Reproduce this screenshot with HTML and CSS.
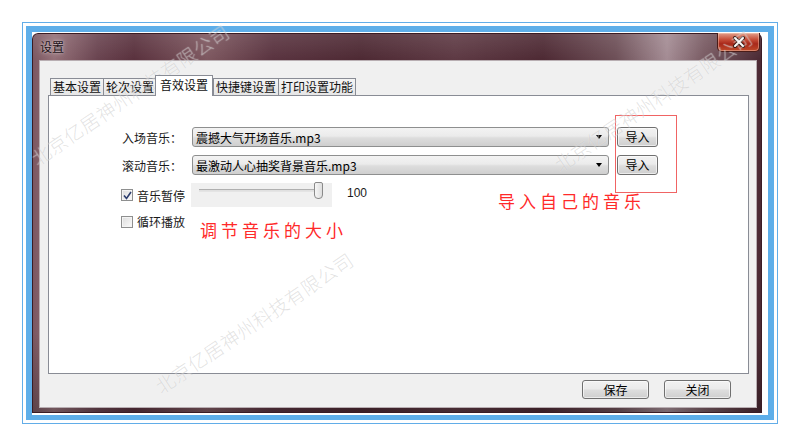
FILE: index.html
```html
<!DOCTYPE html>
<html lang="zh">
<head>
<meta charset="utf-8">
<link rel="stylesheet" href="styles.css">
</head>
<body>
<div class="frame-outer">
  <div class="frame-blue">
    <div class="window">
      <div class="titlebar">
        <span class="title">设置</span>
        <div class="close-btn">
          <svg width="16" height="12" viewBox="0 0 16 12"><path d="M4 2 L12 10 M12 2 L4 10" stroke="#3a1a14" stroke-width="4" stroke-linecap="round"/><path d="M4 2 L12 10 M12 2 L4 10" stroke="#ffffff" stroke-width="2" stroke-linecap="round"/></svg>
        </div>
      </div>
      <div class="client">
        <div class="tabs">
          <div class="tab">基本设置</div>
          <div class="tab">轮次设置</div>
          <div class="tab active">音效设置</div>
          <div class="tab">快捷键设置</div>
          <div class="tab">打印设置功能</div>
        </div>
        <div class="panel">
          <div class="row">
            <span class="label">入场音乐：</span>
            <div class="combo"><span>震撼大气开场音乐.mp3</span><i class="arrow"></i></div>
            <button class="btn import">导入</button>
          </div>
          <div class="row">
            <span class="label">滚动音乐：</span>
            <div class="combo"><span>最激动人心抽奖背景音乐.mp3</span><i class="arrow"></i></div>
            <button class="btn import">导入</button>
          </div>
          <div class="row row-slider">
            <label class="check-label">
              <span class="checkbox checked"><svg width="9" height="9" viewBox="0 0 9 9"><path d="M1 4.5 L3.5 7.5 L8 1" fill="none" stroke="#2c3d6e" stroke-width="1.6"/></svg></span>
              音乐暂停
            </label>
            <div class="slider">
              <div class="track"></div>
              <div class="thumb"></div>
            </div>
            <span class="value">100</span>
          </div>
          <div class="row row-check">
            <label class="check-label">
              <span class="checkbox"></span>
              循环播放
            </label>
          </div>
        </div>
        <div class="footer">
          <button class="btn foot">保存</button>
          <button class="btn foot">关闭</button>
        </div>
      </div>
    </div>
  </div>
</div>

<div class="note-box"></div>
<div class="note note-import">导入自己的音乐</div>
<div class="note note-volume">调节音乐的大小</div>

<div class="wm wm1">北京亿居神州科技有限公司</div>
<div class="wm wm2">北京亿居神州科技有限公司</div>
<div class="wm wm3">北京亿居神州科技有限公司</div>
</body>
</html>
```

FILE: styles.css
```css
* { box-sizing: border-box; }
html, body {
  margin: 0;
  padding: 0;
  background: #ffffff;
  width: 800px;
  height: 446px;
  overflow: hidden;
  font-family: "Noto Sans CJK SC", "Liberation Sans", sans-serif;
  font-size: 12px;
  color: #1a1a1a;
}
body { position: relative; }

.frame-outer {
  margin: 22px 0 0 22px;
  width: 756px;
  height: 402px;
  border: 1px solid #62ade8;
  padding: 3px;
  background: #fff;
}
.frame-blue {
  width: 100%;
  height: 100%;
  border-style: solid;
  border-color: #5eaee9;
  border-width: 6px 6px 5px 6px;
  background: #fff;
  padding-top: 1px;
}

.window {
  width: 730px;
  height: 380px;
  border-radius: 6px 6px 0 0;
  padding: 0 5px 5px 7px;
  display: flex;
  flex-direction: column;
  background:
    linear-gradient(180deg, rgba(255,255,255,0.10) 0px, rgba(255,255,255,0) 26px, rgba(0,0,0,0) 300px, rgba(0,0,0,0.25) 380px),
    linear-gradient(90deg, #7a5660 0%, #947078 3%, #6a4450 9%, #5a323e 14%, #7e5860 24%, #5a3440 33%, #4e2a34 45%, #5e3a44 58%, #4e2a34 70%, #6e5058 80%, #a48c94 87%, #7a5c64 92%, #4a2832 100%);
  box-shadow: inset 0 0 0 1px #3a1c24;
}
.titlebar {
  height: 27px;
  display: flex;
  justify-content: space-between;
  align-items: flex-start;
}
.title {
  margin-top: 7px;
  margin-left: 1px;
  font-size: 12px;
  line-height: 14px;
  color: #1c1016;
  text-shadow: 0 0 5px rgba(255,255,255,0.55), 0 0 2px rgba(255,255,255,0.5);
}
.close-btn {
  width: 43px;
  height: 19px;
  margin-right: -3px;
  border: 1px solid #4a1c18;
  border-top: none;
  border-radius: 0 0 5px 5px;
  background: linear-gradient(180deg, #e2a08c 0%, #c8503a 35%, #a8281a 60%, #c04a2a 100%);
  display: flex;
  align-items: center;
  justify-content: center;
  box-shadow: inset 0 0 0 1px rgba(255,220,200,0.4);
}

.client {
  flex: 1;
  background: #f0f0f0;
  border: 1px solid #b8aeb2;
  padding: 14px 7px 0 8px;
  display: flex;
  flex-direction: column;
}

.tabs {
  display: flex;
  align-items: flex-end;
  height: 20px;
  padding-left: 2px;
}
.tab {
  height: 17px;
  padding: 0 2px;
  border: 1px solid #898c95;
  border-bottom: none;
  background: linear-gradient(180deg, #f4f4f4, #e6e6e6);
  line-height: 15px;
  color: #111;
  margin-right: -1px;
  white-space: nowrap;
}
.tab.active {
  position: relative;
  z-index: 1;
  height: 21px;
  margin-bottom: -1px;
  padding: 0 4px;
  margin-left: -1px;
  margin-right: 0;
  background: #ffffff;
  line-height: 18px;
}

.panel {
  width: 701px;
  height: 279px;
  background: #ffffff;
  border: 1px solid #898c95;
  padding: 31px 0 0 72px;
}

.row {
  display: flex;
  align-items: center;
  height: 20px;
}
.row + .row { margin-top: 8px; }
.label {
  width: 71px;
  padding-left: 1px;
  white-space: nowrap;
}
.combo {
  width: 417px;
  height: 20px;
  border: 1px solid #8e8f8f;
  border-radius: 3px;
  background: linear-gradient(180deg, #f3f3f3 0%, #ebebeb 45%, #dddddd 55%, #cfcfcf 100%);
  display: flex;
  align-items: center;
  justify-content: space-between;
  padding: 0 6px 0 3px;
  color: #000;
}
.arrow {
  width: 0;
  height: 0;
  border-left: 3px solid transparent;
  border-right: 3px solid transparent;
  border-top: 4px solid #000;
}
.btn {
  font-family: "Noto Sans CJK SC", "Liberation Sans", sans-serif;
  font-size: 12px;
  color: #000;
  border: 1px solid #707070;
  border-radius: 3px;
  background: linear-gradient(180deg, #f2f2f2 0%, #ebebeb 45%, #dddddd 55%, #cfcfcf 100%);
  padding: 0;
  line-height: 16px;
  box-shadow: inset 0 0 0 1px rgba(255,255,255,0.6);
}
.import {
  width: 41px;
  height: 20px;
  margin-left: 8px;
}

.row-slider { height: 24px; }
.check-label {
  width: 70px;
  display: flex;
  align-items: center;
  gap: 4px;
  white-space: nowrap;
}
.checkbox {
  width: 12px;
  height: 12px;
  border: 1px solid #8e8f8f;
  background: linear-gradient(135deg, #dcdcdc, #fbfbfb);
  box-shadow: inset 0 0 0 1px #f4f4f4;
  display: flex;
  align-items: center;
  justify-content: center;
}
.slider {
  position: relative;
  width: 141px;
  height: 24px;
  background: #f0f0f0;
}
.track {
  position: absolute;
  left: 8px;
  top: 6px;
  width: 124px;
  height: 3px;
  border-top: 1px solid #b0b0b0;
  border-bottom: 1px solid #e4e4e4;
  background: #e0e0e0;
}
.thumb {
  position: absolute;
  left: 123px;
  top: -1px;
  width: 9px;
  height: 17px;
  border: 1px solid #8a8a8a;
  border-radius: 2px 2px 4px 4px;
  background: linear-gradient(90deg, #f6f6f6, #dedede);
}
.value {
  margin-left: 15px;
  margin-top: -5px;
  font-family: "Liberation Sans", sans-serif;
  font-size: 12px;
}
.row-check {
  height: 13px;
  margin-top: 8px !important;
}

.footer {
  display: flex;
  justify-content: flex-end;
  gap: 15px;
  padding-right: 18px;
  margin-top: 6px;
}
.foot {
  width: 67px;
  height: 19px;
}

.note-box {
  position: absolute;
  left: 615px;
  top: 115px;
  width: 62px;
  height: 78px;
  border: 1px solid #f06464;
}
.note {
  position: absolute;
  font-size: 17px;
  letter-spacing: 4px;
  color: #ff2a2a;
  line-height: 20px;
  white-space: nowrap;
}
.note-import { left: 498px; top: 191px; }
.note-volume { left: 200px; top: 220px; }

.wm {
  position: absolute;
  font-size: 19px;
  line-height: 20px;
  letter-spacing: 0.5px;
  white-space: nowrap;
  font-weight: 300;
  color: rgba(150,150,150,0.28);
  text-shadow: 0 0 1px rgba(255,255,255,0.6);
  transform: rotate(-34deg);
  transform-origin: left center;
  pointer-events: none;
}
.wm1 { left: 157px; top: 378px; }
.wm2 { left: 556px; top: 156px; }
.wm3 { left: 33px; top: 150px; }
```
